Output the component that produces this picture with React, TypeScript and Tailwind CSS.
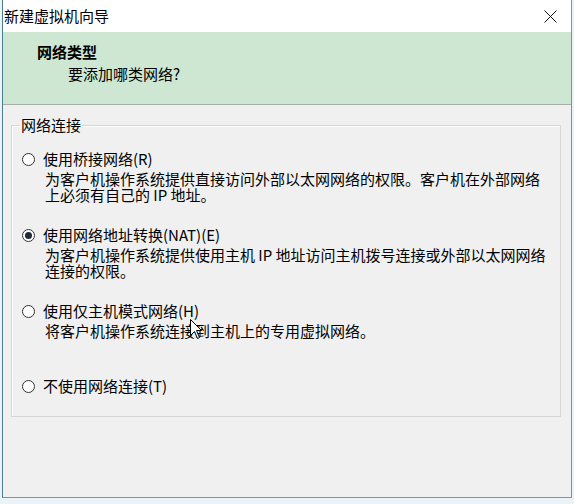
import React from "react";

const font = { fontFamily: '"Noto Sans CJK SC", "Noto Sans", sans-serif' };

const Radio = ({ checked }: { checked?: boolean }) => (
  <div className="ml-[2px] w-[13px] h-[13px] rounded-full border border-[#333333] bg-white flex items-center justify-center shrink-0">
    {checked && <div className="w-[7px] h-[7px] rounded-full bg-[#1f2b3a]" />}
  </div>
);

const Option = ({
  label,
  lines,
  checked,
  className,
}: {
  label: string;
  lines?: string[];
  checked?: boolean;
  className?: string;
}) => (
  <div className={className}>
    <div className="h-[20px] flex items-center">
      <Radio checked={checked} />
      <span className="ml-[8px] text-[15px] leading-[20px] text-black">{label}</span>
    </div>
    {lines && (
      <div className="mt-[2px] pl-[25px] text-[15px] text-black">
        {lines.map((l) => (
          <div key={l} className="h-[16px] leading-[16px] whitespace-nowrap">
            {l}
          </div>
        ))}
      </div>
    )}
  </div>
);

const App = () => {
  return (
    <div
      className="relative w-[574px] h-[504px] bg-[#eaf3f7] px-[2px] overflow-hidden"
      style={font}
    >
      <div className="h-[498px] border-x border-b border-l-[#4b7f90] border-r-[#6d9aa8] border-b-[#8f8f8f] flex flex-col">
        {/* title bar */}
        <div className="h-[32px] bg-white flex items-center justify-between pl-[1px] pr-[14px]">
          <span className="text-[15px] text-black">新建虚拟机向导</span>
          <svg width="13" height="13" viewBox="0 0 13 13">
            <path d="M0.5 0.5 L12.5 12.5 M12.5 0.5 L0.5 12.5" stroke="#111" strokeWidth="1" />
          </svg>
        </div>

        {/* header */}
        <div className="h-[73px] bg-[#cde7d3] border-b border-[#a5aea8] pl-[34px] pt-[10px]">
          <div className="text-[15px] leading-[20px] font-bold text-black">网络类型</div>
          <div className="mt-[2px] ml-[31px] text-[15px] leading-[20px] text-black">
            要添加哪类网络?
          </div>
        </div>

        {/* body */}
        <div className="flex-1 bg-[#f0f0f0] pt-[12px]">
          <fieldset className="ml-[8px] w-[550px] h-[300px] border border-[#d6d6d6] shadow-[inset_1px_1px_0_#ffffff] px-[8px]">
            <legend className="px-[1px] text-[15px] leading-[16px] text-black">网络连接</legend>
            <Option
              className="mt-[16px]"
              label="使用桥接网络(R)"
              lines={[
                "为客户机操作系统提供直接访问外部以太网网络的权限。客户机在外部网络",
                "上必须有自己的 IP 地址。",
              ]}
            />
            <Option
              className="mt-[22px]"
              checked
              label="使用网络地址转换(NAT)(E)"
              lines={[
                "为客户机操作系统提供使用主机 IP 地址访问主机拨号连接或外部以太网网络",
                "连接的权限。",
              ]}
            />
            <Option
              className="mt-[22px]"
              label="使用仅主机模式网络(H)"
              lines={["将客户机操作系统连接到主机上的专用虚拟网络。"]}
            />
            <Option className="mt-[37px]" label="不使用网络连接(T)" />
          </fieldset>
        </div>
      </div>

      {/* mouse pointer */}
      <svg
        className="absolute left-[190px] top-[319px]"
        width="13"
        height="21"
        viewBox="0 0 13 21"
      >
        <path
          d="M0.5 0.5 L0.5 16.5 L4.5 12.5 L7.5 19.5 L9.5 18.5 L6.5 11.5 L11.5 11.5 Z"
          fill="#ffffff"
          stroke="#000000"
          strokeWidth="1"
          strokeLinejoin="round"
        />
      </svg>
    </div>
  );
};

export default App;
